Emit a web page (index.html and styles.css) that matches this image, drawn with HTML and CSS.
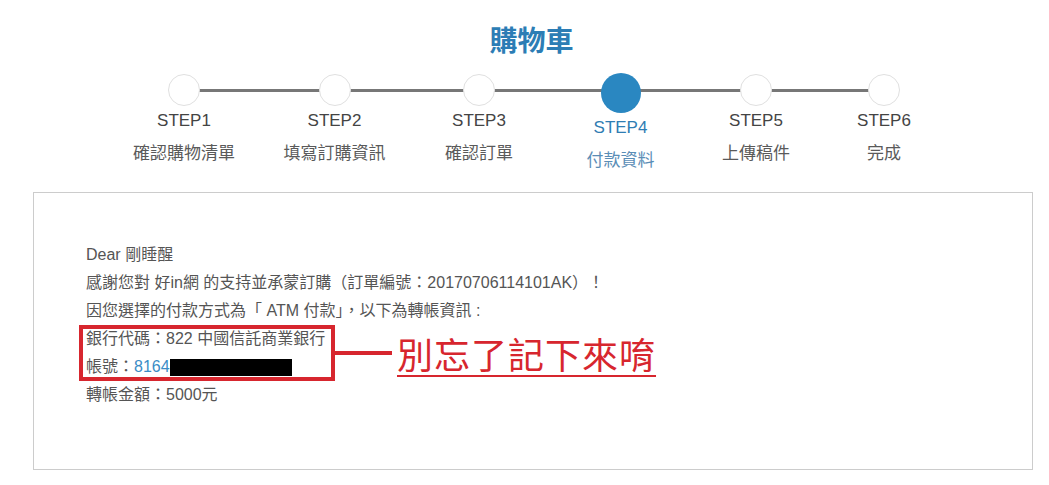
FILE: index.html
```html
<!DOCTYPE html>
<html lang="zh-Hant">
<head>
<meta charset="utf-8">
<title>購物車</title>
<link rel="stylesheet" href="styles.css">
</head>
<body>
  <h1 class="title">購物車</h1>

  <ol class="steps">
    <li class="step">
      <span class="dot"></span>
      <span class="step-no">STEP1</span>
      <span class="step-name">確認購物清單</span>
    </li>
    <li class="step">
      <span class="dot"></span>
      <span class="step-no">STEP2</span>
      <span class="step-name">填寫訂購資訊</span>
    </li>
    <li class="step">
      <span class="dot"></span>
      <span class="step-no">STEP3</span>
      <span class="step-name">確認訂單</span>
    </li>
    <li class="step step-active">
      <span class="dot"></span>
      <span class="step-no">STEP4</span>
      <span class="step-name">付款資料</span>
    </li>
    <li class="step">
      <span class="dot"></span>
      <span class="step-no">STEP5</span>
      <span class="step-name">上傳稿件</span>
    </li>
    <li class="step">
      <span class="dot"></span>
      <span class="step-no">STEP6</span>
      <span class="step-name">完成</span>
    </li>
  </ol>

  <section class="panel">
    <p class="line">Dear 剛睡醒</p>
    <p class="line">感謝您對 好in網 的支持並承蒙訂購（訂單編號：20170706114101AK）！</p>
    <p class="line">因您選擇的付款方式為「 ATM 付款」，以下為轉帳資訊 :</p>
    <div class="hl-row">
      <div class="hl-box">
        <p class="line hl-first">銀行代碼：822 中國信託商業銀行</p>
        <p class="line hl-last">帳號：<span class="acct">8164</span><span class="redact"></span></p>
      </div>
      <span class="hl-connector"></span>
      <span class="hl-note">別忘了記下來唷</span>
    </div>
    <p class="line">轉帳金額：5000元</p>
  </section>
</body>
</html>
```

FILE: styles.css
```css
* {
  box-sizing: border-box;
}

body {
  margin: 0;
  background: #fff;
  font-family: "Liberation Sans", "Noto Sans CJK TC", sans-serif;
  color: #555;
}

.title {
  margin: 19px 0 0;
  font-family: "Noto Sans CJK TC", sans-serif;
  font-size: 28px;
  font-weight: 700;
  line-height: 40px;
  text-align: center;
  color: #2c7db5;
  padding-left: 14px;
}

.steps {
  position: relative;
  list-style: none;
  margin: 15px 0 0 107px;
  padding: 0;
  width: 840px;
  display: grid;
  grid-template-columns: 154px 147px 142px 141px 130px 126px;
  align-items: start;
}

.steps::before {
  content: "";
  position: absolute;
  left: 77px;
  right: 63px;
  top: 15px;
  height: 3px;
  background: #777;
}

.step {
  position: relative;
  display: flex;
  flex-direction: column;
  align-items: center;
}

.dot {
  width: 32px;
  height: 32px;
  border-radius: 50%;
  border: 1px solid #e0e0e0;
  background: #fff;
}

.step-no {
  margin-top: 3px;
  font-size: 17px;
  line-height: 24px;
  color: #444;
}

.step-name {
  font-size: 17px;
  line-height: 42px;
  color: #5a5a5a;
}

.step-active .dot {
  width: 40px;
  height: 40px;
  margin-top: -1px;
  border: none;
  background: #2a87c1;
}

.step-active .step-no {
  color: #2f7db3;
}

.step-active .step-name {
  color: #5a8db6;
}

.panel {
  margin: 10px 0 0 33px;
  width: 1000px;
  border: 1px solid #ccc;
  padding: 48px 52px 60px;
}

.line {
  margin: 0;
  font-size: 16px;
  line-height: 28px;
  color: #555;
}

.hl-row {
  display: flex;
  align-items: center;
}

.hl-box {
  width: 256px;
  margin-left: -7px;
  padding-left: 3px;
  border: 4px solid #d7262e;
}

.hl-first {
  margin-top: -4px;
}

.hl-last {
  margin-bottom: -4px;
}

.acct {
  color: #3a8cc6;
}

.redact {
  display: inline-block;
  width: 122px;
  height: 17px;
  background: #000;
  vertical-align: -4px;
}

.hl-connector {
  width: 57px;
  height: 4px;
  background: #d7262e;
}

.hl-note {
  margin-left: 5px;
  font-family: "Noto Sans CJK TC", sans-serif;
  font-size: 36px;
  line-height: 44px;
  letter-spacing: 1px;
  color: #d7262e;
  text-decoration: underline;
  text-decoration-thickness: 2px;
  text-underline-offset: 6px;
}
```
